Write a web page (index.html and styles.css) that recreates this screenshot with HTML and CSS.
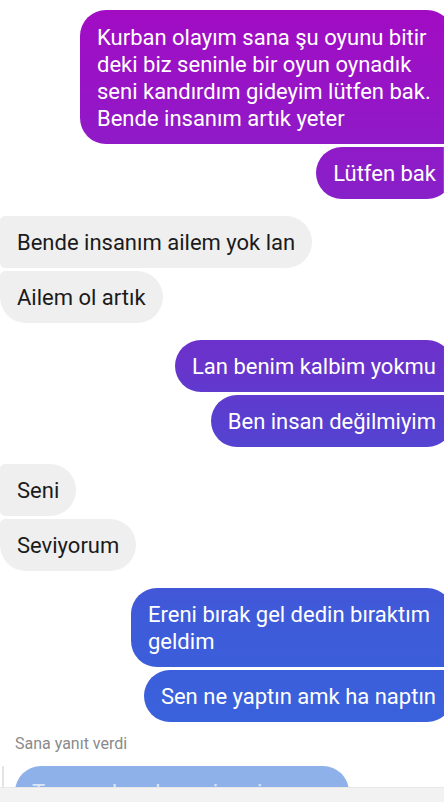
FILE: index.html
```html
<!DOCTYPE html>
<html lang="tr">
<head>
  <meta charset="UTF-8" />
  <meta name="viewport" content="width=device-width, initial-scale=1.0" />
  <title>Sohbet</title>
  <link rel="stylesheet" href="styles.css">
</head>
<body>
  <div class="chat">
    <div class="group out">
      <div class="bubble first multi long">Kurban olayım sana şu oyunu bitir deki biz seninle bir oyun oynadık seni kandırdım gideyim lütfen bak. Bende insanım artık yeter</div>
      <div class="bubble last">Lütfen bak</div>
    </div>

    <div class="group in">
      <div class="bubble first">Bende insanım ailem yok lan</div>
      <div class="bubble last">Ailem ol artık</div>
    </div>

    <div class="group out">
      <div class="bubble first">Lan benim kalbim yokmu</div>
      <div class="bubble last">Ben insan değilmiyim</div>
    </div>

    <div class="group in">
      <div class="bubble first">Seni</div>
      <div class="bubble last">Seviyorum</div>
    </div>

    <div class="group out">
      <div class="bubble first multi wide">Ereni bırak gel dedin bıraktım geldim</div>
      <div class="bubble last">Sen ne yaptın amk ha naptın</div>
    </div>

    <div class="reply">
      <div class="reply-label">Sana yanıt verdi</div>
      <div class="reply-quote">
        <div class="quote-bubble">Tamam bende seni seviyorum gel</div>
      </div>
    </div>
  </div>

  <div class="composer"></div>
</body>
</html>
```

FILE: styles.css
```css
html, body {
  margin: 0;
  height: 100%;
}
body {
  font-family: Roboto, "Noto Sans", sans-serif;
  background: #fff;
  overflow: hidden;
  position: relative;
}
.chat {
  display: flex;
  flex-direction: column;
  gap: 17px;
  padding-top: 10px;
}
.group {
  display: flex;
  flex-direction: column;
  gap: 3px;
}
.group.out {
  align-items: flex-end;
  margin-right: -9px;
}
.group.in {
  align-items: flex-start;
}
.bubble {
  font-size: 22px;
  line-height: 27px;
  padding: 13px 17px 12px;
  border-radius: 26px;
  white-space: nowrap;
}
.bubble.multi {
  white-space: normal;
  box-sizing: border-box;
}
.bubble.long {
  width: 373px;
  padding-top: 14px;
}
.bubble.wide {
  width: 322px;
}
.out .bubble {
  color: #fff;
  background: linear-gradient(180deg, #a30bc3 0px, #8c1dc8 170px, #6834cc 365px, #583fd0 420px, #3e5bd9 620px, #3864dd 760px, #3468e0 802px);
  background-attachment: fixed;
}
.out .bubble.first {
  border-bottom-right-radius: 5px;
}
.out .bubble.last {
  border-top-right-radius: 5px;
}
.in .bubble {
  color: #1b1b1b;
  background: #efefef;
}
.in .bubble.first {
  border-top-left-radius: 5px;
  border-bottom-left-radius: 5px;
}
.in .bubble.last {
  border-top-left-radius: 5px;
}

.reply {
  display: flex;
  flex-direction: column;
  gap: 13px;
  margin-top: -4px;
}
.reply-label {
  padding-left: 15px;
  font-size: 16px;
  line-height: 18px;
  color: #8a8a8a;
}
.reply-quote {
  border-left: 2px solid #e4e4e4;
  margin-left: 2px;
  padding-left: 11px;
}
.quote-bubble {
  width: 300px;
  padding: 13px 17px 12px;
  font-size: 22px;
  line-height: 27px;
  color: #dbe6f9;
  background: #8fb1ea;
  border-radius: 26px;
  white-space: nowrap;
  overflow: hidden;
}
.composer {
  position: absolute;
  left: 0;
  right: 0;
  bottom: 0;
  height: 14px;
  background: #f2f2f2;
  border-top: 1px solid #e8e8e8;
}
```
